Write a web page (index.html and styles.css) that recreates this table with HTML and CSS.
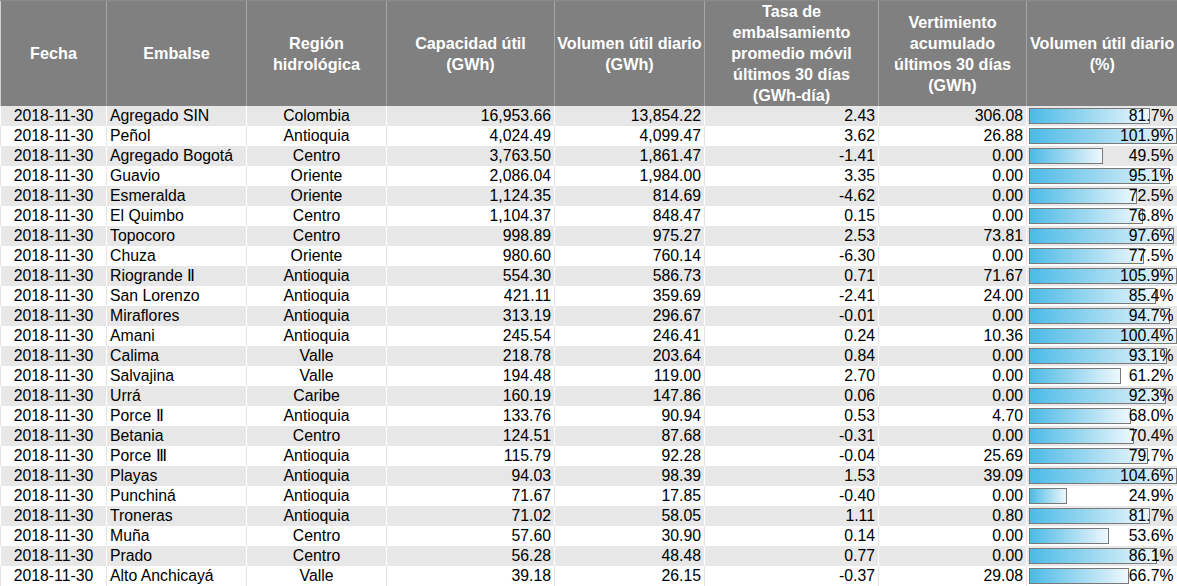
FILE: index.html
```html
<!DOCTYPE html>
<html lang="es">
<head>
<meta charset="utf-8">
<title>Embalses</title>
<link rel="stylesheet" href="styles.css">
</head>
<body>
<table class="grid">
<colgroup>
<col class="c-fecha"><col class="c-emb"><col class="c-reg"><col class="c-cap"><col class="c-vol"><col class="c-tasa"><col class="c-vert"><col class="c-pct">
</colgroup>
<thead>
<tr>
<th>Fecha</th>
<th>Embalse</th>
<th>Región<br>hidrológica</th>
<th>Capacidad útil<br>(GWh)</th>
<th>Volumen útil diario<br>(GWh)</th>
<th>Tasa de<br>embalsamiento<br>promedio móvil<br>últimos 30 días<br>(GWh-día)</th>
<th>Vertimiento<br>acumulado<br>últimos 30 días<br>(GWh)</th>
<th>Volumen útil diario<br>(%)</th>
</tr>
</thead>
<tbody>
<tr><td class="ctr">2018-11-30</td><td class="lft">Agregado SIN</td><td class="ctr">Colombia</td><td class="num">16,953.66</td><td class="num">13,854.22</td><td class="num">2.43</td><td class="num">306.08</td><td class="pct"><span class="bar" style="width:119px"></span><span class="pv">81.7%</span></td></tr>
<tr><td class="ctr">2018-11-30</td><td class="lft">Peñol</td><td class="ctr">Antioquia</td><td class="num">4,024.49</td><td class="num">4,099.47</td><td class="num">3.62</td><td class="num">26.88</td><td class="pct"><span class="bar" style="width:146px"></span><span class="pv">101.9%</span></td></tr>
<tr><td class="ctr">2018-11-30</td><td class="lft">Agregado Bogotá</td><td class="ctr">Centro</td><td class="num">3,763.50</td><td class="num">1,861.47</td><td class="num">-1.41</td><td class="num">0.00</td><td class="pct"><span class="bar" style="width:72px"></span><span class="pv">49.5%</span></td></tr>
<tr><td class="ctr">2018-11-30</td><td class="lft">Guavio</td><td class="ctr">Oriente</td><td class="num">2,086.04</td><td class="num">1,984.00</td><td class="num">3.35</td><td class="num">0.00</td><td class="pct"><span class="bar" style="width:139px"></span><span class="pv">95.1%</span></td></tr>
<tr><td class="ctr">2018-11-30</td><td class="lft">Esmeralda</td><td class="ctr">Oriente</td><td class="num">1,124.35</td><td class="num">814.69</td><td class="num">-4.62</td><td class="num">0.00</td><td class="pct"><span class="bar" style="width:106px"></span><span class="pv">72.5%</span></td></tr>
<tr><td class="ctr">2018-11-30</td><td class="lft">El Quimbo</td><td class="ctr">Centro</td><td class="num">1,104.37</td><td class="num">848.47</td><td class="num">0.15</td><td class="num">0.00</td><td class="pct"><span class="bar" style="width:112px"></span><span class="pv">76.8%</span></td></tr>
<tr><td class="ctr">2018-11-30</td><td class="lft">Topocoro</td><td class="ctr">Centro</td><td class="num">998.89</td><td class="num">975.27</td><td class="num">2.53</td><td class="num">73.81</td><td class="pct"><span class="bar" style="width:143px"></span><span class="pv">97.6%</span></td></tr>
<tr><td class="ctr">2018-11-30</td><td class="lft">Chuza</td><td class="ctr">Oriente</td><td class="num">980.60</td><td class="num">760.14</td><td class="num">-6.30</td><td class="num">0.00</td><td class="pct"><span class="bar" style="width:113px"></span><span class="pv">77.5%</span></td></tr>
<tr><td class="ctr">2018-11-30</td><td class="lft">Riogrande Ⅱ</td><td class="ctr">Antioquia</td><td class="num">554.30</td><td class="num">586.73</td><td class="num">0.71</td><td class="num">71.67</td><td class="pct"><span class="bar" style="width:146px"></span><span class="pv">105.9%</span></td></tr>
<tr><td class="ctr">2018-11-30</td><td class="lft">San Lorenzo</td><td class="ctr">Antioquia</td><td class="num">421.11</td><td class="num">359.69</td><td class="num">-2.41</td><td class="num">24.00</td><td class="pct"><span class="bar" style="width:125px"></span><span class="pv">85.4%</span></td></tr>
<tr><td class="ctr">2018-11-30</td><td class="lft">Miraflores</td><td class="ctr">Antioquia</td><td class="num">313.19</td><td class="num">296.67</td><td class="num">-0.01</td><td class="num">0.00</td><td class="pct"><span class="bar" style="width:139px"></span><span class="pv">94.7%</span></td></tr>
<tr><td class="ctr">2018-11-30</td><td class="lft">Amani</td><td class="ctr">Antioquia</td><td class="num">245.54</td><td class="num">246.41</td><td class="num">0.24</td><td class="num">10.36</td><td class="pct"><span class="bar" style="width:146px"></span><span class="pv">100.4%</span></td></tr>
<tr><td class="ctr">2018-11-30</td><td class="lft">Calima</td><td class="ctr">Valle</td><td class="num">218.78</td><td class="num">203.64</td><td class="num">0.84</td><td class="num">0.00</td><td class="pct"><span class="bar" style="width:136px"></span><span class="pv">93.1%</span></td></tr>
<tr><td class="ctr">2018-11-30</td><td class="lft">Salvajina</td><td class="ctr">Valle</td><td class="num">194.48</td><td class="num">119.00</td><td class="num">2.70</td><td class="num">0.00</td><td class="pct"><span class="bar" style="width:90px"></span><span class="pv">61.2%</span></td></tr>
<tr><td class="ctr">2018-11-30</td><td class="lft">Urrá</td><td class="ctr">Caribe</td><td class="num">160.19</td><td class="num">147.86</td><td class="num">0.06</td><td class="num">0.00</td><td class="pct"><span class="bar" style="width:135px"></span><span class="pv">92.3%</span></td></tr>
<tr><td class="ctr">2018-11-30</td><td class="lft">Porce Ⅱ</td><td class="ctr">Antioquia</td><td class="num">133.76</td><td class="num">90.94</td><td class="num">0.53</td><td class="num">4.70</td><td class="pct"><span class="bar" style="width:100px"></span><span class="pv">68.0%</span></td></tr>
<tr><td class="ctr">2018-11-30</td><td class="lft">Betania</td><td class="ctr">Centro</td><td class="num">124.51</td><td class="num">87.68</td><td class="num">-0.31</td><td class="num">0.00</td><td class="pct"><span class="bar" style="width:103px"></span><span class="pv">70.4%</span></td></tr>
<tr><td class="ctr">2018-11-30</td><td class="lft">Porce Ⅲ</td><td class="ctr">Antioquia</td><td class="num">115.79</td><td class="num">92.28</td><td class="num">-0.04</td><td class="num">25.69</td><td class="pct"><span class="bar" style="width:117px"></span><span class="pv">79.7%</span></td></tr>
<tr><td class="ctr">2018-11-30</td><td class="lft">Playas</td><td class="ctr">Antioquia</td><td class="num">94.03</td><td class="num">98.39</td><td class="num">1.53</td><td class="num">39.09</td><td class="pct"><span class="bar" style="width:146px"></span><span class="pv">104.6%</span></td></tr>
<tr><td class="ctr">2018-11-30</td><td class="lft">Punchiná</td><td class="ctr">Antioquia</td><td class="num">71.67</td><td class="num">17.85</td><td class="num">-0.40</td><td class="num">0.00</td><td class="pct"><span class="bar" style="width:36px"></span><span class="pv">24.9%</span></td></tr>
<tr><td class="ctr">2018-11-30</td><td class="lft">Troneras</td><td class="ctr">Antioquia</td><td class="num">71.02</td><td class="num">58.05</td><td class="num">1.11</td><td class="num">0.80</td><td class="pct"><span class="bar" style="width:119px"></span><span class="pv">81.7%</span></td></tr>
<tr><td class="ctr">2018-11-30</td><td class="lft">Muña</td><td class="ctr">Centro</td><td class="num">57.60</td><td class="num">30.90</td><td class="num">0.14</td><td class="num">0.00</td><td class="pct"><span class="bar" style="width:78px"></span><span class="pv">53.6%</span></td></tr>
<tr><td class="ctr">2018-11-30</td><td class="lft">Prado</td><td class="ctr">Centro</td><td class="num">56.28</td><td class="num">48.48</td><td class="num">0.77</td><td class="num">0.00</td><td class="pct"><span class="bar" style="width:126px"></span><span class="pv">86.1%</span></td></tr>
<tr><td class="ctr">2018-11-30</td><td class="lft">Alto Anchicayá</td><td class="ctr">Valle</td><td class="num">39.18</td><td class="num">26.15</td><td class="num">-0.37</td><td class="num">29.08</td><td class="pct"><span class="bar" style="width:98px"></span><span class="pv">66.7%</span></td></tr>
</tbody>
</table>
</body>
</html>
```

FILE: styles.css
```css
html, body {
  margin: 0;
  padding: 0;
  background: #ffffff;
}

body {
  font-family: "Liberation Sans", Arial, sans-serif;
  color: #000;
}

.grid {
  border-collapse: collapse;
  table-layout: fixed;
  width: 1177px;
  font-size: 15.8px;
}

.c-fecha { width: 106px; }
.c-emb { width: 140px; }
.c-reg { width: 140px; }
.c-cap { width: 168px; }
.c-vol { width: 150px; }
.c-tasa { width: 174px; }
.c-vert { width: 148px; }
.c-pct { width: 151px; }

.grid th {
  background: #808080;
  color: #ffffff;
  font-weight: bold;
  font-size: 16.2px;
  line-height: 21px;
  height: 104px;
  padding: 0;
  text-align: center;
  vertical-align: middle;
  border-left: 1px solid #a6a6a6;
  border-top: 1px solid #8a8a8a;
}

.grid th:first-child {
  border-left: 1px solid #d0d0d0;
}

.grid td {
  height: 20px;
  padding: 0;
  line-height: 20px;
  white-space: nowrap;
  overflow: hidden;
  border-left: 1px solid #e4e4e4;
}

.grid tbody tr:nth-child(odd) td {
  background: #e7e7e7;
  border-left-color: #ffffff;
}

.grid tbody tr:nth-child(even) td {
  background: #ffffff;
}

.ctr { text-align: center; }
.lft { text-align: left; padding-left: 3px !important; }
.num { text-align: right; padding-right: 3px !important; }

.pct {
  position: relative;
  text-align: right;
  padding-right: 4px !important;
}

.bar {
  position: absolute;
  left: 2px;
  top: 2px;
  height: 14px;
  border: 1px solid #7a7a7a;
  background: linear-gradient(to right, #4cbbe7 0%, #9dd8f0 50%, #eef8fd 100%);
}

.pv {
  position: relative;
}
```
